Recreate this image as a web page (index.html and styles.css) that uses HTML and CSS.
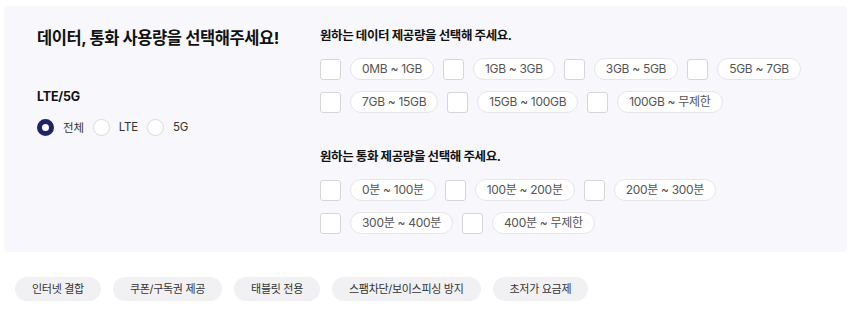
FILE: index.html
```html
<!DOCTYPE html>
<html lang="ko">
<head>
    <meta charset="UTF-8">
    <title>요금제 필터</title>
    <link rel="stylesheet" href="styles.css">
</head>
<body>
    <div id="page">
        <div class="panel">
            <div class="left">
                <h2 class="title">데이터, 통화 사용량을 선택해주세요!</h2>
                <h3 class="sub">LTE/5G</h3>
                <div class="radios">
                    <label class="radio"><span class="dot on"></span>전체</label>
                    <label class="radio"><span class="dot"></span>LTE</label>
                    <label class="radio"><span class="dot"></span>5G</label>
                </div>
            </div>
            <div class="right">
                <h3 class="sub">원하는 데이터 제공량을 선택해 주세요.</h3>
                <div class="row first">
                    <label class="check"><span class="box"></span><span class="pill">0MB ~ 1GB</span></label>
                    <label class="check"><span class="box"></span><span class="pill">1GB ~ 3GB</span></label>
                    <label class="check"><span class="box"></span><span class="pill">3GB ~ 5GB</span></label>
                    <label class="check"><span class="box"></span><span class="pill">5GB ~ 7GB</span></label>
                </div>
                <div class="row">
                    <label class="check"><span class="box"></span><span class="pill">7GB ~ 15GB</span></label>
                    <label class="check"><span class="box"></span><span class="pill">15GB ~ 100GB</span></label>
                    <label class="check"><span class="box"></span><span class="pill">100GB ~ 무제한</span></label>
                </div>

                <h3 class="sub second">원하는 통화 제공량을 선택해 주세요.</h3>
                <div class="row first">
                    <label class="check"><span class="box"></span><span class="pill">0분 ~ 100분</span></label>
                    <label class="check"><span class="box"></span><span class="pill">100분 ~ 200분</span></label>
                    <label class="check"><span class="box"></span><span class="pill">200분 ~ 300분</span></label>
                </div>
                <div class="row">
                    <label class="check"><span class="box"></span><span class="pill">300분 ~ 400분</span></label>
                    <label class="check"><span class="box"></span><span class="pill">400분 ~ 무제한</span></label>
                </div>
            </div>
        </div>
        <div class="tags">
            <span class="tag">인터넷 결합</span>
            <span class="tag">쿠폰/구독권 제공</span>
            <span class="tag">태블릿 전용</span>
            <span class="tag">스팸차단/보이스피싱 방지</span>
            <span class="tag">초저가 요금제</span>
        </div>
    </div>
</body>
</html>
```

FILE: styles.css
```css
*{
    margin: 0;
    padding: 0;
    box-sizing: border-box;
}
body{
    background-color: #fff;
    font-family: Inter, "Noto Sans CJK KR", sans-serif;
    color: #111;
}
#page{
    padding: 6px 3px 0 4px;
}
.panel{
    display: flex;
    height: 246px;
    padding: 21px 0 19px 33px;
    background-color: #f8f8fc;
    border-radius: 4px;
}
.left{
    width: 283px;
}
.title{
    font-size: 16.5px;
    line-height: 22px;
    font-weight: 700;
    letter-spacing: -0.4px;
}
.sub{
    font-size: 12.5px;
    line-height: 18px;
    font-weight: 700;
    letter-spacing: -0.4px;
}
.left .sub{
    margin-top: 39px;
    letter-spacing: -0.2px;
}
.radios{
    display: flex;
    align-items: center;
    margin-top: 12px;
    height: 18px;
}
.radio{
    display: flex;
    align-items: center;
    gap: 9px;
    margin-right: 9px;
    font-size: 11.5px;
    letter-spacing: -0.2px;
    color: #333;
}
.dot{
    width: 17px;
    height: 17px;
    border-radius: 50%;
    background-color: #fff;
    border: 1px solid #dadada;
}
.dot.on{
    border: 5px solid #1f2468;
}
.row{
    display: flex;
    gap: 9px;
    margin-top: 11px;
}
.row.first{
    margin-top: 13px;
}
.second{
    margin-top: 35px;
}
.check{
    display: flex;
    align-items: center;
    gap: 9px;
}
.box{
    width: 21px;
    height: 21px;
    background-color: #fff;
    border: 1px solid #d6d6d9;
    border-radius: 3px;
}
.pill{
    height: 22px;
    line-height: 20px;
    padding: 0 11px;
    font-size: 12px;
    letter-spacing: -0.3px;
    color: #555;
    background-color: #fff;
    border: 1px solid #e6e6ea;
    border-radius: 11px;
}
.tags{
    display: flex;
    gap: 12px;
    margin-top: 25px;
    padding-left: 11px;
}
.tag{
    height: 24px;
    line-height: 24px;
    padding: 0 17px;
    font-size: 11px;
    letter-spacing: -0.3px;
    color: #333;
    background-color: #f1f1f4;
    border-radius: 12px;
}
```
